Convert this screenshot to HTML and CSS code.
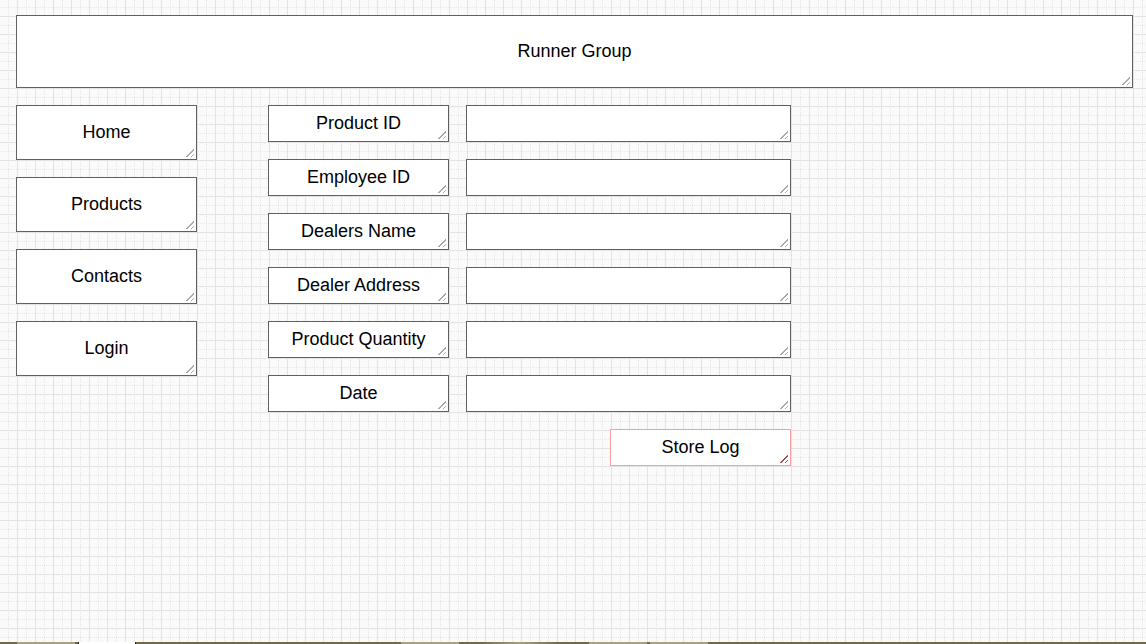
FILE: index.html
```html
<!DOCTYPE html>
<html lang="en">
<head>
<meta charset="utf-8">
<title>Runner Group</title>
<link rel="stylesheet" href="styles.css">
</head>
<body>
<div class="page">
  <header class="box header">Runner Group</header>
  <div class="main">
    <nav class="nav">
      <div class="box nav-item">Home</div>
      <div class="box nav-item">Products</div>
      <div class="box nav-item">Contacts</div>
      <div class="box nav-item">Login</div>
    </nav>
    <div class="form">
      <div class="row"><div class="box label">Product ID</div><div class="box input"></div></div>
      <div class="row"><div class="box label">Employee ID</div><div class="box input"></div></div>
      <div class="row"><div class="box label">Dealers Name</div><div class="box input"></div></div>
      <div class="row"><div class="box label">Dealer Address</div><div class="box input"></div></div>
      <div class="row"><div class="box label">Product Quantity</div><div class="box input"></div></div>
      <div class="row"><div class="box label">Date</div><div class="box input"></div></div>
      <div class="actions"><div class="box label submit">Store Log</div></div>
    </div>
  </div>
</div>
<footer class="tabs">
  <span class="tab tab-a"></span>
  <span class="tab tab-b"></span>
  <span class="tab tab-c"></span>
  <span class="tab tab-d"></span>
  <span class="tab tab-d"></span>
</footer>
</body>
</html>
```

FILE: styles.css
```css
* { box-sizing: border-box; }

html, body { margin: 0; padding: 0; }

body {
  width: 1146px;
  height: 644px;
  overflow: hidden;
  display: flex;
  flex-direction: column;
  font-family: "Liberation Sans", Arial, sans-serif;
  font-size: 18px;
  color: #000;
  background-color: #fafafa;
  background-image:
    linear-gradient(to right, #e3e3e3 1px, transparent 1px),
    linear-gradient(to bottom, #e3e3e3 1px, transparent 1px),
    conic-gradient(at 1px 1px, transparent 75%, #e6e6e6 0),
    conic-gradient(at 1px 1px, transparent 75%, #e6e6e6 0);
  background-size: 18px 18px, 18px 18px, 18px 2px, 2px 18px;
  background-position: 17px 0, 0 16px, 8px 0, 0 7px;
}

.page {
  flex: 1;
  padding: 15px 0 0 16px;
}

.box {
  position: relative;
  background: #fff;
  border: 1px solid #606060;
  display: flex;
  align-items: center;
  justify-content: center;
}

.box::after {
  content: "";
  position: absolute;
  right: 2px;
  bottom: 2px;
  width: 8px;
  height: 8px;
  background: linear-gradient(135deg,
    transparent 48%, #a8a8a8 48%, #a8a8a8 58%, transparent 58%,
    transparent 76%, #a8a8a8 76%, #a8a8a8 86%, transparent 86%);
}

.header {
  width: 1117px;
  height: 73px;
}

.main {
  display: flex;
  margin-top: 17px;
  gap: 71px;
}

.nav {
  display: flex;
  flex-direction: column;
  gap: 17px;
}

.nav-item {
  width: 181px;
  height: 55px;
}

.form {
  display: flex;
  flex-direction: column;
  gap: 17px;
}

.row {
  display: flex;
  gap: 17px;
}

.label {
  width: 181px;
  height: 37px;
}

.input {
  width: 325px;
  height: 37px;
}

.actions {
  display: flex;
  justify-content: flex-end;
}

.submit {
  border-color: #f4a0a0;
}

.submit::after {
  background: linear-gradient(135deg,
    transparent 48%, #a04a4a 48%, #a04a4a 58%, transparent 58%,
    transparent 76%, #a04a4a 76%, #a04a4a 86%, transparent 86%);
}

.tabs {
  height: 2px;
  display: flex;
  gap: 3px;
  padding-left: 17px;
  background: linear-gradient(to right, #726a46 0, #726a46 480px, #a8a07a 520px, #726a46 560px, #726a46 100%);
}

.tab {
  width: 58px;
  height: 2px;
  background: #a8a27f;
}

.tab-b {
  background: #fff;
  border-left: 1px solid #3a3320;
  border-right: 1px solid #3a3320;
}

.tab-c {
  margin-left: 262px;
  background: #a8a27f;
}

.tab-d {
  background: #a8a27f;
}

.tab-c + .tab-d {
  margin-left: 127px;
}
```
